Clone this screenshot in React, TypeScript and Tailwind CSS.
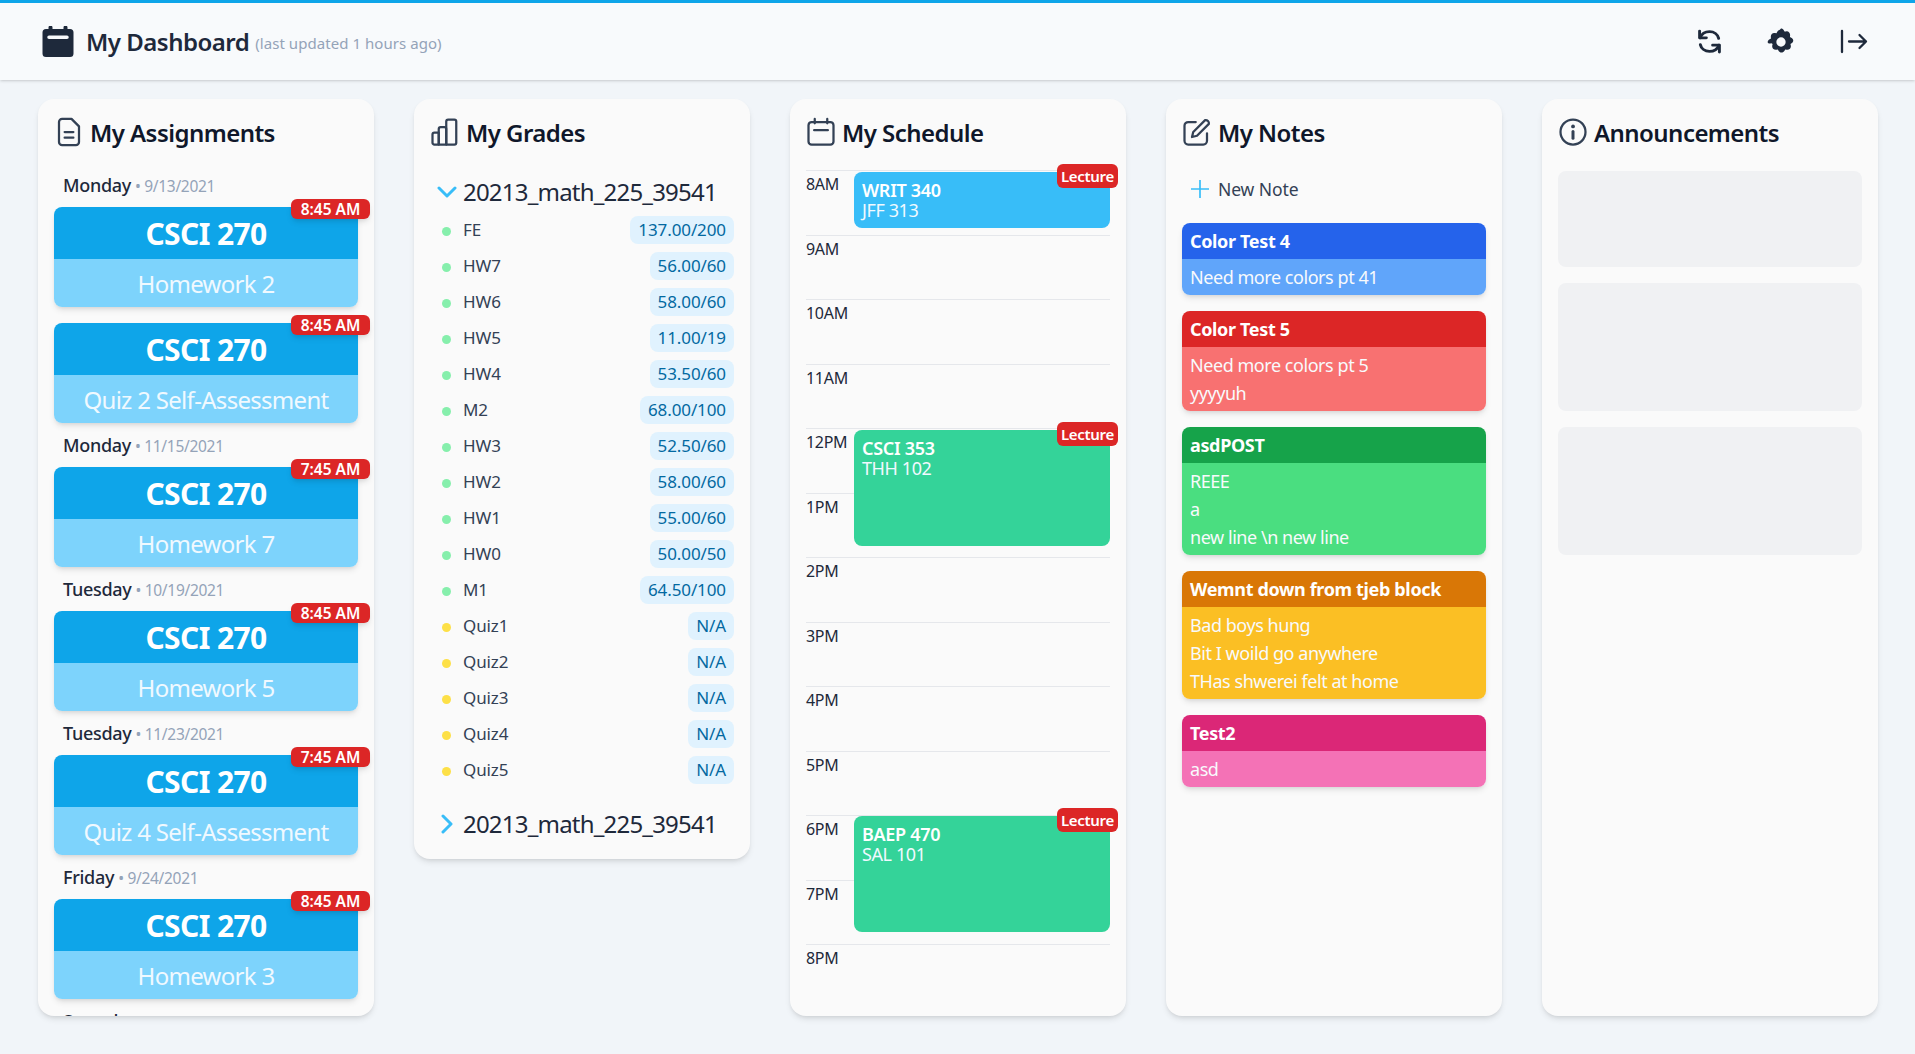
import React from "react";

const FONT = "font-['Noto_Sans','Open_Sans',sans-serif]";

type IconProps = { className?: string };

const CalendarSolid = ({ className }: IconProps) => (
  <svg viewBox="0 0 32 32" className={className}>
    <path fill="#1e293b" fillRule="evenodd" d="M6.500 1.500a2 2 0 0 1 4 0V3h11V1.500a2 2 0 0 1 4 0V3h2.500A3.500 3.500 0 0 1 31.500 6.500v21a3.500 3.500 0 0 1-3.500 3.500H4a3.500 3.500 0 0 1-3.500-3.500v-21A3.500 3.500 0 0 1 4 3h2.500V1.500ZM7 9.500a1.500 1.500 0 0 0 0 3.500h18a1.500 1.500 0 0 0 0-3.500H7Z" />
  </svg>
);
const Sync = ({ className }: IconProps) => (
  <svg viewBox="0 0 24 24" fill="none" stroke="#1e293b" strokeWidth="2.800" strokeLinecap="round" strokeLinejoin="round" className={className}>
    <path d="M2.500 2v6.500H9" />
    <path d="M3 8.500C4.500 4.500 8 2.500 12 2.500c4.500 0 8 2.800 8.800 6.500" />
    <path d="M21.500 22v-6.500H15" />
    <path d="M21 15.500c-1.500 4-5 6-9 6-4.500 0-8-2.800-8.800-6.500" />
  </svg>
);
const Gear = ({ className }: IconProps) => (
  <svg viewBox="0 0 24 24" className={className}>
    <path fill="#1e293b" fillRule="evenodd" d="M12 0.500c1.100 0 1.900.5 2.400 1.500l.6 1.100 1.300-.2c1.100-.2 2 .1 2.700.9.700.8.900 1.600.8 2.700l-.1 1.200 1.100.6c1 .5 1.700 1.300 1.700 2.400 0 1.100-.5 1.700-1.400 2.300l-1 .7.300 1.200c.2 1.100 0 2-.7 2.800-.8.800-1.700 1-2.800.9l-1.200-.2-.7 1.100c-.6 1-1.500 1.600-2.600 1.600s-1.900-.6-2.500-1.600l-.7-1.100-1.200.2c-1.100.1-2-.1-2.800-.9-.7-.8-.9-1.700-.7-2.800l.3-1.200-1-.7C1.100 13.800.600 13.200.600 12.100c0-1.100.7-1.900 1.700-2.400l1.100-.6-.1-1.200c-.1-1.100.1-1.900.8-2.700.7-.8 1.600-1.100 2.700-.9l1.300.2.600-1.100c.5-1 1.200-1.500 2.300-1.900ZM12 8a4 4 0 1 0 0 8 4 4 0 0 0 0-8Z" />
  </svg>
);
const LogoutBar = ({ className }: IconProps) => (
  <svg viewBox="0 0 28 24" fill="none" stroke="#1e293b" strokeWidth="2.300" strokeLinecap="round" strokeLinejoin="round" className={className}>
    <path d="M2 1.500v21" />
    <path d="M9 12h17M19.500 5.500 26 12l-6.500 6.500" />
  </svg>
);
const Stroke = ({ children }: { children: React.ReactNode }) => (
  <svg viewBox="0 0 24 24" fill="none" stroke="#334155" strokeWidth="1.800" strokeLinecap="round" strokeLinejoin="round" className="-mt-[3px] h-[30px] w-[30px] shrink-0">
    {children}
  </svg>
);
const DocIcon = () => (
  <Stroke>
    <path d="M6.500 1.500h7.500L20 7.500V20a2.500 2.500 0 0 1-2.500 2.500h-11A2.500 2.500 0 0 1 4 20V4a2.500 2.500 0 0 1 2.500-2.500Z" />
    <path d="M8.500 12h7M8.500 16.500h7" />
  </Stroke>
);
const BarsIcon = () => (
  <Stroke>
    <path d="M2 14a1.500 1.500 0 0 1 1.500-1.500H7V22H3.500A1.500 1.500 0 0 1 2 20.500V14Z" />
    <path d="M7 9.500A1.500 1.500 0 0 1 8.500 8h3A1.500 1.500 0 0 1 13 9.500V22H7V9.500Z" />
    <path d="M13 3.500A1.500 1.500 0 0 1 14.500 2h5A1.500 1.500 0 0 1 21 3.500v17a1.500 1.500 0 0 1-1.500 1.500H13V3.500Z" />
  </Stroke>
);
const CalIcon = () => (
  <Stroke>
    <rect x="2" y="4" width="20" height="18" rx="2.500" />
    <path d="M7 1.500V5M17 1.500V5M6.500 10.500h11" />
  </Stroke>
);
const EditIcon = () => (
  <Stroke>
    <path d="M11 4H5a3 3 0 0 0-3 3v12a3 3 0 0 0 3 3h12a3 3 0 0 0 3-3v-6" />
    <path d="M18.500 2.500a2.600 2.600 0 0 1 3 3L12 15l-4 1 1-4 9.500-9.500Z" />
  </Stroke>
);
const InfoIcon = () => (
  <Stroke>
    <circle cx="12" cy="12" r="10" />
    <path d="M12 11.500V17" strokeWidth="2.400" />
    <path d="M12 7.500h.01" strokeWidth="3" />
  </Stroke>
);
const Chevron = ({ open }: { open: boolean }) => (
  <svg viewBox="0 0 20 20" fill="none" stroke="#38bdf8" strokeWidth="3" strokeLinecap="round" strokeLinejoin="round" className="h-5 w-5 shrink-0">
    {open ? <path d="M2 6l8 8 8-8" /> : <path d="M6 2l8 8-8 8" />}
  </svg>
);
const Plus = () => (
  <svg viewBox="0 0 20 20" fill="none" stroke="#38bdf8" strokeWidth="1.700" className="h-[20px] w-[20px] shrink-0">
    <path d="M10 1v18M1 10h18" />
  </svg>
);

const Panel = ({ icon, title, children, className = "" }: { icon: React.ReactNode; title: string; children: React.ReactNode; className?: string }) => (
  <section className={`rounded-2xl bg-[#fafafa] shadow-[0_4px_6px_-1px_rgba(0,0,0,0.1),0_2px_4px_-2px_rgba(0,0,0,0.1)] overflow-hidden flex flex-col ${className}`}>
    <h2 className="flex items-center gap-[6px] px-4 pt-[14px] h-[54px] text-[24px] leading-none font-semibold text-[#0f172a] tracking-[-0.55px] shrink-0">
      {icon}
      {title}
    </h2>
    {children}
  </section>
);

const assignments = [
  { day: "Monday", date: "9/13/2021", items: [["8:45 AM", "Homework 2"], ["8:45 AM", "Quiz 2 Self-Assessment"]] },
  { day: "Monday", date: "11/15/2021", items: [["7:45 AM", "Homework 7"]] },
  { day: "Tuesday", date: "10/19/2021", items: [["8:45 AM", "Homework 5"]] },
  { day: "Tuesday", date: "11/23/2021", items: [["7:45 AM", "Quiz 4 Self-Assessment"]] },
  { day: "Friday", date: "9/24/2021", items: [["8:45 AM", "Homework 3"]] },
  { day: "Saturday", date: "", items: [] as string[][] },
];

const grades: [string, string, boolean][] = [
  ["FE", "137.00/200", true],
  ["HW7", "56.00/60", true],
  ["HW6", "58.00/60", true],
  ["HW5", "11.00/19", true],
  ["HW4", "53.50/60", true],
  ["M2", "68.00/100", true],
  ["HW3", "52.50/60", true],
  ["HW2", "58.00/60", true],
  ["HW1", "55.00/60", true],
  ["HW0", "50.00/50", true],
  ["M1", "64.50/100", true],
  ["Quiz1", "N/A", false],
  ["Quiz2", "N/A", false],
  ["Quiz3", "N/A", false],
  ["Quiz4", "N/A", false],
  ["Quiz5", "N/A", false],
];

const hours = ["8AM", "9AM", "10AM", "11AM", "12PM", "1PM", "2PM", "3PM", "4PM", "5PM", "6PM", "7PM", "8PM"];

const events = [
  { t: "WRIT 340", r: "JFF 313", bg: "bg-[#38bdf8]", top: 2, h: 56 },
  { t: "CSCI 353", r: "THH 102", bg: "bg-[#34d399]", top: 260, h: 116 },
  { t: "BAEP 470", r: "SAL 101", bg: "bg-[#34d399]", top: 646, h: 116 },
];

const notes = [
  { t: "Color Test 4", head: "bg-[#2563eb]", body: "bg-[#60a5fa]", lines: ["Need more colors pt 41"] },
  { t: "Color Test 5", head: "bg-[#dc2626]", body: "bg-[#f87171]", lines: ["Need more colors pt 5", "yyyyuh"] },
  { t: "asdPOST", head: "bg-[#16a34a]", body: "bg-[#4ade80]", lines: ["REEE", "a", "new line \\n new line"] },
  { t: "Wemnt down from tjeb block", head: "bg-[#d97706]", body: "bg-[#fbbf24]", lines: ["Bad boys hung", "Bit I woild go anywhere", "THas shwerei felt at home"] },
  { t: "Test2", head: "bg-[#db2777]", body: "bg-[#f472b6]", lines: ["asd"] },
];

export default function App() {
  return (
    <div className={`h-[1054px] w-full overflow-hidden bg-[#f1f5f9] ${FONT}`}>
      <header className="flex h-[80px] items-center justify-between border-t-[3px] border-[#0ea5e9] bg-[#f8fafc] pl-[42px] pr-[47px] shadow-[0_1px_3px_0_rgba(0,0,0,0.15),0_1px_2px_-1px_rgba(0,0,0,0.1)]">
        <div className="flex items-center">
          <CalendarSolid className="mr-[12px] h-[32px] w-[32px]" />
          <h1 className="text-[24px] font-semibold leading-8 text-[#1e293b] tracking-[-0.5px]">My Dashboard</h1>
          <span className="ml-[6px] mt-[2px] text-[15px] leading-8 text-[#94a3b8] tracking-[0.05px]">(last updated 1 hours ago)</span>
        </div>
        <div className="flex items-center gap-[45px]">
          <Sync className="h-[25px] w-[25px]" />
          <Gear className="h-[28px] w-[28px]" />
          <LogoutBar className="h-[25px] w-[28px]" />
        </div>
      </header>

      <main className="grid grid-cols-5 gap-10 pl-[38px] pr-[37px] pt-[19px] h-[937px] items-start">
        <Panel icon={<DocIcon />} title="My Assignments" className="h-[917px]">
          <div className="flex flex-col gap-[8px] px-4 pt-[18px]">
            {assignments.map((g, i) => (
              <div key={i} className="flex flex-col gap-[8px]">
                <div className="flex h-[28px] items-center gap-[4px] px-[9px] leading-6">
                  <span className="text-[18px] font-medium text-[#1e293b] tracking-[-0.3px]">{g.day}</span>
                  {g.date && <span className="mt-[2px] text-[15.5px] text-[#94a3b8] tracking-[-0.3px]">• {g.date}</span>}
                </div>
                <div className="flex flex-col gap-[16px]">
                  {g.items.map(([time, name], j) => (
                    <div key={j} className="relative rounded-lg shadow-md">
                      <div className="flex h-[52px] items-center justify-center rounded-t-lg bg-[#0ea5e9] pt-[2px] text-[30px] font-bold leading-none text-white tracking-[-0.6px]">CSCI 270</div>
                      <div className="flex h-[48px] items-center justify-center rounded-b-lg bg-[#7dd3fc] pt-[1px] text-[24px] leading-none text-[#f0f9ff] tracking-[-0.7px]">{name}</div>
                      <div className="absolute right-[-12px] top-[-8px] flex h-[20px] w-[79px] items-center justify-center rounded-md bg-[#dc2626] pt-[1px] text-[15.5px] font-semibold text-white shadow-md tracking-[0px]">{time}</div>
                    </div>
                  ))}
                </div>
              </div>
            ))}
          </div>
        </Panel>

        <Panel icon={<BarsIcon />} title="My Grades">
          <div className="px-4 pb-[17px] pt-[21px]">
            <div className="mb-[2px] flex h-[36px] items-center gap-[6px] pl-[7px] text-[24px] text-[#1e293b] tracking-[-0.8px]">
              <Chevron open />
              20213_math_225_39541
            </div>
            <ul>
              {grades.map(([n, v, ok]) => (
                <li key={n} className="flex h-[36px] items-center justify-between">
                  <span className="flex items-center text-[17px] text-[#334155] tracking-[-0.1px]">
                    <span className={`ml-[12px] mr-[12px] mt-[3px] h-[9px] w-[9px] rounded-full ${ok ? "bg-[#86efac]" : "bg-[#fde047]"}`} />
                    {n}
                  </span>
                  <span className="flex h-[28px] items-center rounded-lg bg-[#e0f2fe] px-2 text-[17px] text-[#0369a1] tracking-[-0.1px]">{v}</span>
                </li>
              ))}
            </ul>
            <div className="mt-[18px] flex h-[36px] items-center gap-[6px] pl-[7px] text-[24px] text-[#1e293b] tracking-[-0.8px]">
              <Chevron open={false} />
              20213_math_225_39541
            </div>
          </div>
        </Panel>

        <Panel icon={<CalIcon />} title="My Schedule" className="h-[917px]">
          <div className="relative mx-4 mt-[17px]">
            {hours.map((h) => (
              <div key={h} className="h-[64.5px] border-t border-[#e5e7eb] pt-[1px] text-[16px] leading-6 text-[#1e293b] tracking-[-0.3px]">{h}</div>
            ))}
            {events.map((e) => (
              <div key={e.t} style={{ top: e.top, height: e.h }} className={`absolute left-[48px] right-0 rounded-lg ${e.bg} px-2 pt-[8px] text-white`}>
                <div className="text-[18px] font-semibold leading-[20px] tracking-[-0.3px]">{e.t}</div>
                <div className="text-[18px] leading-[20px] tracking-[-0.4px] text-[#f0f9ff]">{e.r}</div>
                <div className="absolute right-[-8px] top-[-8px] flex h-[24px] w-[61px] items-center justify-center rounded-md bg-[#dc2626] text-[15px] font-semibold tracking-[-0.3px] text-white">Lecture</div>
              </div>
            ))}
          </div>
        </Panel>

        <Panel icon={<EditIcon />} title="My Notes" className="h-[917px]">
          <div className="px-4 pt-[16px]">
            <div className="mb-[14px] flex h-[40px] items-center gap-[8px] pl-[8px] text-[17.5px] text-[#334155] tracking-[-0.1px]">
              <Plus />
              New Note
            </div>
            {notes.map((n) => (
              <div key={n.t} className="mb-[16px] overflow-hidden rounded-lg shadow-md">
                <div className={`flex h-[36px] items-center px-2 text-[18px] font-bold tracking-[-0.35px] text-white ${n.head}`}>{n.t}</div>
                <div className={`px-2 py-1 text-[18px] leading-[28px] tracking-[-0.45px] text-[#f8fafc] ${n.body}`}>
                  {n.lines.map((l) => (
                    <div key={l}>{l}</div>
                  ))}
                </div>
              </div>
            ))}
          </div>
        </Panel>

        <Panel icon={<InfoIcon />} title="Announcements" className="h-[917px]">
          <div className="flex flex-col gap-4 px-4 pt-[18px]">
            <div className="h-[96px] rounded-lg bg-[#f0f1f3]" />
            <div className="h-[128px] rounded-lg bg-[#f0f1f3]" />
            <div className="h-[128px] rounded-lg bg-[#f0f1f3]" />
          </div>
        </Panel>
      </main>
    </div>
  );
}
